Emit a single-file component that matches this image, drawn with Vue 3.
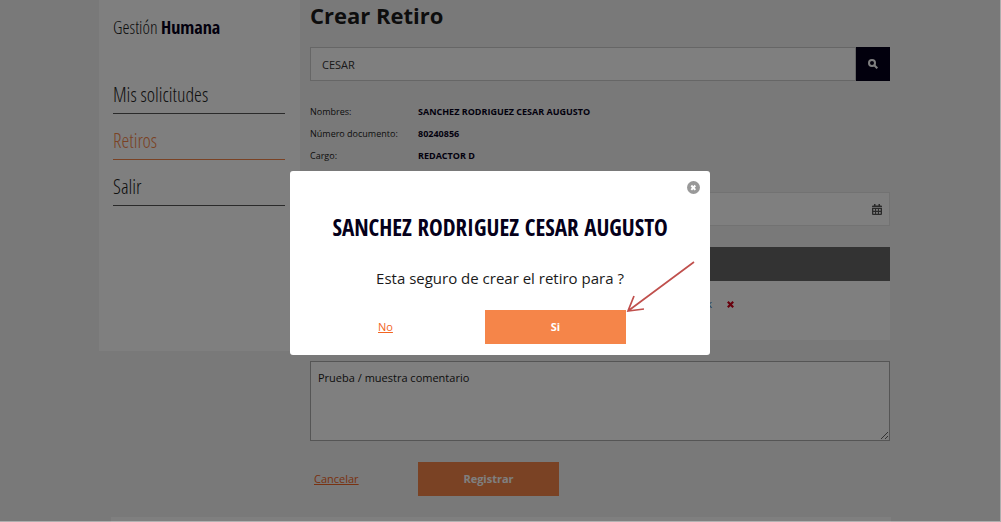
<script setup>
import { ref } from 'vue'

const menu = [
  { label: 'Mis solicitudes', active: false },
  { label: 'Retiros', active: true },
  { label: 'Salir', active: false },
]
const query = ref('CESAR')
const date = ref('')
const comment = ref('Prueba / muestra comentario')
const employee = [
  ['Nombres:', 'SANCHEZ RODRIGUEZ CESAR AUGUSTO'],
  ['Número documento:', '80240856'],
  ['Cargo:', 'REDACTOR D'],
]
</script>

<template>
  <div class="page">
    <div class="shell">
      <aside class="sidebar">
        <p class="brand">Gestión <b>Humana</b></p>
        <nav>
          <a v-for="item in menu" :key="item.label" href="#" :class="{ active: item.active }">{{ item.label }}</a>
        </nav>
      </aside>

      <main class="content">
        <h1>Crear Retiro</h1>
        <div class="search">
          <input v-model="query" type="text" aria-label="Buscar">
          <button type="button" aria-label="Buscar">
            <svg width="10" height="10" viewBox="0 0 10 10" fill="none" stroke="#fff" stroke-width="2">
              <circle cx="4" cy="4" r="3" />
              <path d="M6.3 6.3L9.3 9.3" />
            </svg>
          </button>
        </div>

        <dl class="info">
          <template v-for="[name, value] in employee" :key="name">
            <dt>{{ name }}</dt>
            <dd>{{ value }}</dd>
          </template>
        </dl>

        <div class="date">
          <input v-model="date" type="text" aria-label="Fecha">
          <svg width="10" height="11" viewBox="0 0 10 11">
            <path fill="#555" fill-rule="evenodd" d="M0 2.5Q0 1.5 1 1.5H2V0H3.5V1.5H6.5V0H8V1.5H9Q10 1.5 10 2.5V3.3H0ZM0 4H10V10Q10 11 9 11H1Q0 11 0 10ZM1.3 5V6.8H3V5ZM4.1 5V6.8H5.9V5ZM7 5V6.8H8.7V5ZM1.3 8V9.8H3V8ZM4.1 8V9.8H5.9V8ZM7 8V9.8H8.7V8Z" />
          </svg>
        </div>

        <table>
          <thead>
            <tr><th colspan="2"></th></tr>
          </thead>
          <tbody>
            <tr>
              <td class="file"><a href="#">k</a></td>
              <td>
                <button type="button" class="remove" aria-label="Eliminar">
                  <svg width="7" height="7" viewBox="0 0 7 7" stroke="#d0021b" stroke-width="2.2"><path d="M.8.8L6.2 6.2M6.2.8L.8 6.2" /></svg>
                </button>
              </td>
            </tr>
          </tbody>
        </table>

        <textarea v-model="comment" aria-label="Comentario"></textarea>

        <div class="actions">
          <a href="#">Cancelar</a>
          <button type="button" class="primary">Registrar</button>
        </div>
      </main>
    </div>
    <footer></footer>

    <div class="overlay">
      <section class="modal" role="dialog" aria-modal="true" aria-labelledby="dialog-title">
        <button type="button" class="close" aria-label="Cerrar">
          <svg width="13" height="13" viewBox="0 0 13 13">
            <circle cx="6.5" cy="6.5" r="6.5" fill="#999" />
            <path d="M4.3 4.5L8.3 8.9M8.3 4.5L4.3 8.9" stroke="#fff" stroke-width="2" />
          </svg>
        </button>
        <h2 id="dialog-title">SANCHEZ RODRIGUEZ CESAR AUGUSTO</h2>
        <p>Esta seguro de crear el retiro para ?</p>
        <div class="choices">
          <a href="#">No</a>
          <button type="button" class="primary">Si</button>
        </div>
        <svg class="arrow" width="70" height="54" viewBox="0 0 70 54" fill="none" stroke="#c0504d" stroke-width="1.7">
          <path d="M68 1L2 50M8 35L2 50L18 48" />
        </svg>
      </section>
    </div>
  </div>
</template>

<style>
body {
  margin: 0;
}
</style>

<style scoped>
* {
  box-sizing: border-box;
}
.page {
  display: flex;
  flex-direction: column;
  height: 100vh;
  overflow: hidden;
  background: #f2f2f2;
  color: #1a1a1a;
  font: 11px/16px "Open Sans", "Noto Sans", sans-serif;
}
button {
  padding: 0;
  border: 0;
  background: none;
  font: inherit;
  cursor: pointer;
}
a {
  color: #f26522;
}
.shell {
  display: grid;
  grid-template-columns: 201px 1fr;
  align-items: start;
  width: 100%;
  max-width: 803px;
  margin: 0 auto;
}
.sidebar {
  height: 351px;
  padding: 14px 15px 0 14px;
  background: #fff;
  font-family: "Open Sans Condensed Light", "Open Sans Condensed", "Liberation Sans Narrow", sans-serif;
  font-weight: 300;
}
.brand {
  margin: 0 0 42px;
  font-size: 18px;
  line-height: 26px;
}
.brand b {
  color: #05001a;
  font-family: "Open Sans Condensed", "Liberation Sans Narrow", sans-serif;
  font-weight: 700;
}
nav a {
  display: block;
  height: 32px;
  margin-bottom: 14px;
  border-bottom: 1px solid #555;
  color: #222;
  font-size: 20px;
  line-height: 26px;
  text-decoration: none;
}
nav a.active {
  border-color: #f58549;
  color: #f58549;
}
.content {
  padding: 0 12px 0 10px;
}
h1 {
  margin: 0 0 17px;
  font-size: 22px;
  line-height: 30px;
}
.search {
  display: flex;
  height: 34px;
}
.search input {
  flex: 1;
  min-width: 0;
  padding: 2px 11px 0;
  border: 1px solid #ccc;
  color: #333;
  font: inherit;
}
.search button {
  display: grid;
  place-items: center;
  width: 34px;
  background: #05001a;
}
.info {
  display: grid;
  grid-template-columns: 108px 1fr;
  row-gap: 6px;
  margin: 23px 0 28px;
  font-size: 9px;
}
.info dd {
  margin: 0;
  color: #05001a;
  font-weight: 700;
}
.date {
  display: flex;
  align-items: center;
  height: 34px;
  padding-right: 7px;
  border: 1px solid #e5e5e5;
  background: #fff;
}
.date input {
  flex: 1;
  min-width: 0;
  border: 0;
  background: none;
}
table {
  width: 100%;
  margin: 21px 0;
  border-collapse: collapse;
  background: #fff;
}
th {
  height: 34px;
  padding: 0;
  background: #666;
}
td {
  height: 59px;
  padding: 0 0 14px 15px;
  vertical-align: middle;
}
td.file {
  width: 402px;
  padding-left: 0;
  text-align: right;
}
td.file a {
  color: #337ab7;
  text-decoration: none;
}
.remove svg {
  display: block;
}
textarea {
  display: block;
  width: 100%;
  height: 80px;
  padding: 8px 7px;
  border: 1px solid #aaa;
  color: #1a1a1a;
  font: inherit;
}
.actions {
  display: grid;
  grid-template-columns: 104px 141px;
  align-items: center;
  margin: 21px 0 21px 4px;
}
.primary {
  height: 34px;
  background: #f58549;
  color: #fff;
  font-weight: 700;
}
footer {
  flex: 1;
  width: 100%;
  max-width: 780px;
  margin: 0 auto;
  background: #fff;
}
.overlay {
  position: fixed;
  inset: 0;
  display: flex;
  align-items: center;
  justify-content: center;
  padding-top: 4px;
  border: solid rgba(255, 255, 255, .4);
  border-width: 0 1px 1px 0;
  background: rgba(0, 0, 0, .5);
}
.modal {
  position: relative;
  width: 420px;
  padding: 40px 0 11px;
  border-radius: 3px;
  background: #fff;
  text-align: center;
}
.close {
  position: absolute;
  top: 10px;
  right: 10px;
}
.close svg {
  display: block;
}
h2 {
  margin: 0 0 24px;
  color: #05001a;
  font: 700 23px/32px "Open Sans Condensed", "Liberation Sans Narrow", sans-serif;
  white-space: nowrap;
}
.modal p {
  margin: 0 0 21px;
  font-size: 15px;
  line-height: 22px;
}
.choices {
  display: grid;
  grid-template-columns: 107px 141px;
  align-items: center;
  margin-left: 88px;
  text-align: left;
}
.choices .primary {
  text-align: center;
}
.arrow {
  position: absolute;
  top: 90px;
  right: 14px;
}
</style>
